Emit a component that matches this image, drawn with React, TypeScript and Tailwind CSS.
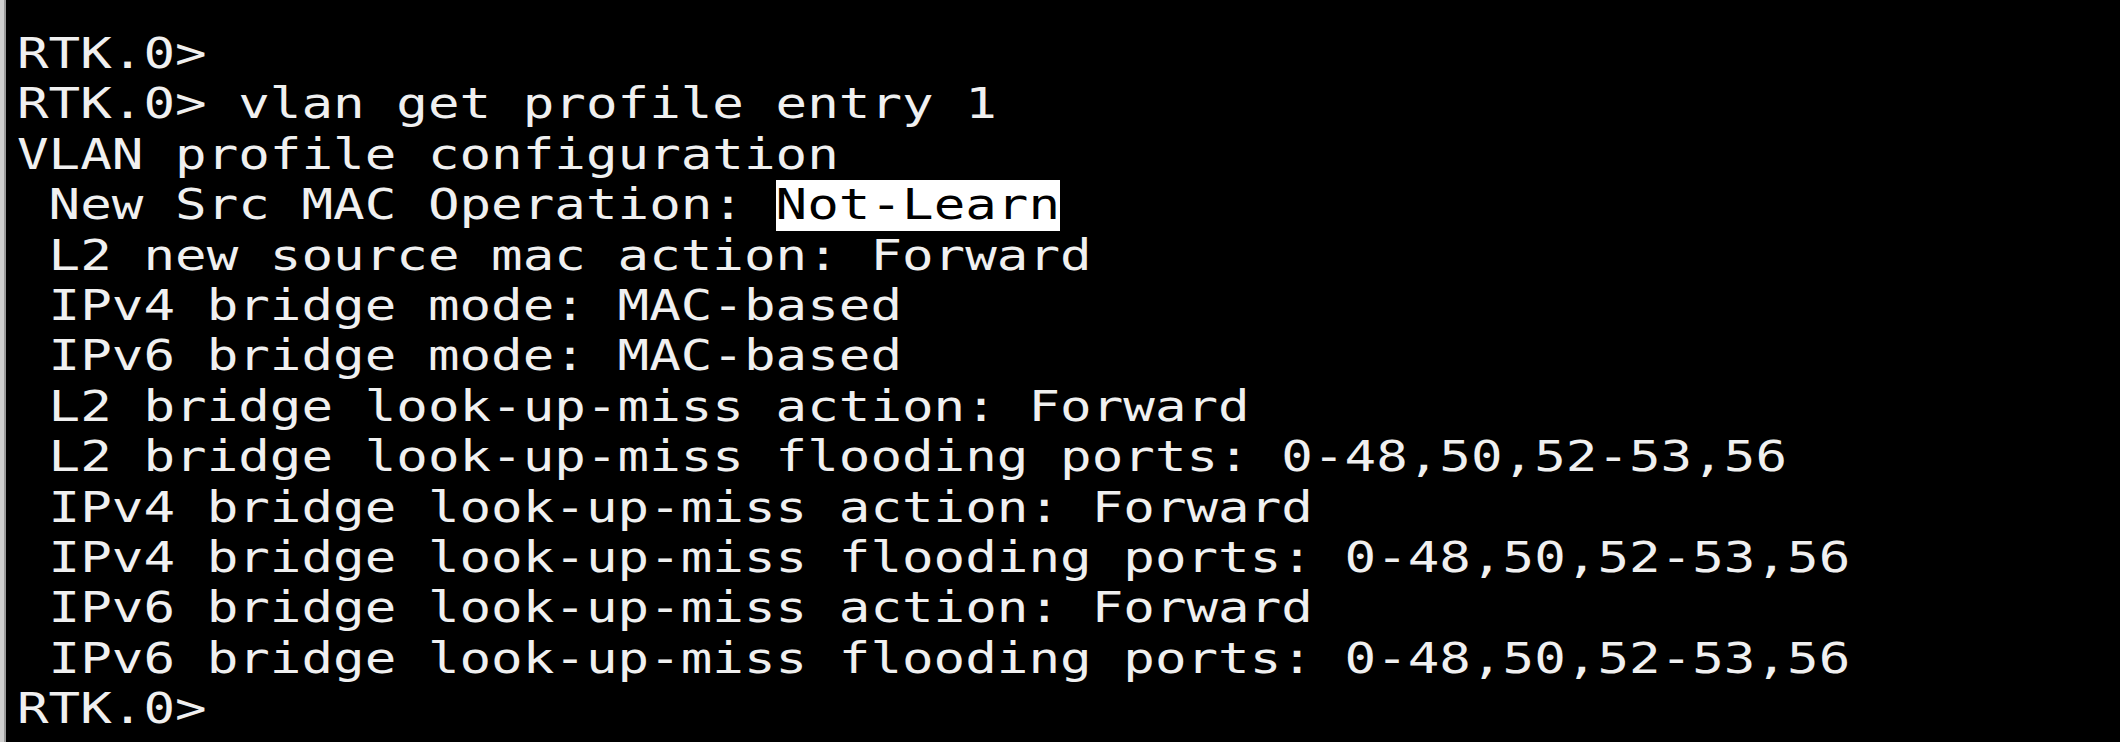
import React from 'react';

const lines: { text: string; mark?: string }[] = [
  { text: 'RTK.0>' },
  { text: 'RTK.0> vlan get profile entry 1' },
  { text: 'VLAN profile configuration' },
  { text: ' New Src MAC Operation: ', mark: 'Not-Learn' },
  { text: ' L2 new source mac action: Forward' },
  { text: ' IPv4 bridge mode: MAC-based' },
  { text: ' IPv6 bridge mode: MAC-based' },
  { text: ' L2 bridge look-up-miss action: Forward' },
  { text: ' L2 bridge look-up-miss flooding ports: 0-48,50,52-53,56' },
  { text: ' IPv4 bridge look-up-miss action: Forward' },
  { text: ' IPv4 bridge look-up-miss flooding ports: 0-48,50,52-53,56' },
  { text: ' IPv6 bridge look-up-miss action: Forward' },
  { text: ' IPv6 bridge look-up-miss flooding ports: 0-48,50,52-53,56' },
  { text: 'RTK.0>' },
];

const App: React.FC = () => {
  return (
    <div className="w-[2120px] h-[742px] bg-black flex overflow-hidden">
      {/* window edge */}
      <div className="w-[6px] h-full bg-[#cfcfcf] border-r-2 border-[#9a9a9a]" />

      {/* console output */}
      <div className="flex-1 pl-[11px] pt-[29px] text-[#f0f0f0] text-[52.5px] leading-[50.4px] font-['DejaVu_Sans_Mono','Liberation_Mono',monospace]">
        {lines.map((line, i) => (
          <div key={i} className="flex h-[50.4px] whitespace-pre">
            <span className="block scale-y-[0.8]">{line.text}</span>
            {line.mark && (
              <span className="block bg-white text-black">
                <span className="block scale-y-[0.8]">{line.mark}</span>
              </span>
            )}
          </div>
        ))}
      </div>
    </div>
  );
};

export default App;
